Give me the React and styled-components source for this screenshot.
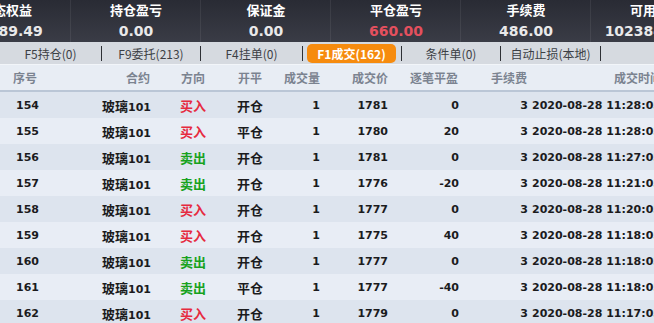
import React from "react";
import styled, { createGlobalStyle } from "styled-components";

const Global = createGlobalStyle`
  html, body { margin: 0; padding: 0; background: #e6ebf2; overflow: hidden; }
  body { width: 654px; height: 323px; font-family: "DejaVu Sans", "Noto Sans CJK SC", sans-serif; }
`;

const Page = styled.div`
  width: 654px;
  height: 323px;
  overflow: hidden;
  display: flex;
  flex-direction: column;
`;

const Summary = styled.div`
  height: 42px;
  flex: none;
  background: linear-gradient(#292b34, #3a3c46);
  display: flex;
  margin-left: -59px;
  width: 780px;
`;

const SumCell = styled.div`
  width: 130px;
  flex: none;
  display: flex;
  flex-direction: column;
  align-items: center;
  box-shadow: inset -1px 0 0 rgba(255, 255, 255, 0.07);
  white-space: nowrap;
`;

const SumLabel = styled.div`
  font-family: "Noto Sans CJK SC", sans-serif;
  font-weight: 700;
  font-size: 13px;
  line-height: 14px;
  margin-top: 3px;
  color: #ffffff;
`;

const SumValue = styled.div`
  font-family: "DejaVu Sans", sans-serif;
  font-weight: 700;
  font-size: 14px;
  line-height: 18px;
  margin-top: 5px;
  color: ${(p) => (p.$red ? "#e4505e" : "#e9e9ea")};
`;

const TabBar = styled.div`
  height: 22px;
  flex: none;
  background: #d6dae0;
  display: flex;
  align-items: center;
`;

const Tab = styled.div`
  width: ${(p) => p.$w}px;
  flex: none;
  display: flex;
  justify-content: center;
  align-items: center;
  height: 19px;
  font-family: "Noto Sans CJK SC", sans-serif;
  font-size: 12px;
  white-space: nowrap;
  color: ${(p) => (p.$active ? "#ffffff" : "#3c3f45")};
  font-weight: ${(p) => (p.$active ? 700 : 400)};
  background: ${(p) => (p.$active ? "#f68b0e" : "transparent")};
  border-radius: 5px;
`;

const Sep = styled.div`
  width: 1px;
  height: 15px;
  background: #2e3035;
  flex: none;
  margin-left: ${(p) => p.$ml || 0}px;
  margin-right: ${(p) => p.$mr || 0}px;
`;

const cols = "60px 92px 82px 32px 55px 68px 71px 69px 220px";

const HeadRow = styled.div`
  display: grid;
  grid-template-columns: ${cols};
  height: 25px;
  flex: none;
  align-items: center;
  background: #e8edf4;
  border-bottom: 2px solid #bac6d6;
  border-top: 1px solid #f2f5f9;
`;

const HeadCell = styled.div`
  font-family: "Noto Sans CJK SC", sans-serif;
  font-weight: 700;
  font-size: 12px;
  color: #7b8390;
  white-space: nowrap;
  text-align: ${(p) => p.$align || "right"};
  padding-left: ${(p) => p.$pl || 0}px;
  padding-right: ${(p) => p.$pr || 0}px;
`;

const Row = styled.div`
  display: grid;
  grid-template-columns: ${cols};
  height: 26px;
  flex: none;
  align-items: center;
  background: ${(p) => (p.$odd ? "#dde4ee" : "#e8edf5")};
`;

const Cell = styled.div`
  font-family: "DejaVu Sans", "Noto Sans CJK SC", sans-serif;
  font-weight: 700;
  font-size: 11px;
  color: ${(p) => p.$color || "#1b1b1d"};
  white-space: nowrap;
  text-align: ${(p) => p.$align || "right"};
  padding-left: ${(p) => p.$pl || 0}px;
  padding-right: ${(p) => p.$pr || 0}px;
`;

const Cjk = styled.span`
  font-family: "Noto Sans CJK SC", sans-serif;
  font-size: 13px;
`;

const summary = [
  ["动态权益", "10289.49"],
  ["持仓盈亏", "0.00"],
  ["保证金", "0.00"],
  ["平仓盈亏", "660.00", true],
  ["手续费", "486.00"],
  ["可用资金", "10238489.49"],
];

// [label, width, separator margin-left, separator margin-right, active]
const tabs = [
  ["F5持仓(0)", 101, 0, 0],
  ["F9委托(213)", 98, 0, 0],
  ["F4挂单(0)", 101, 0, 4],
  ["F1成交(162)", 89, 5, 0, true],
  ["条件单(0)", 98, 0, 0],
  ["自动止损(本地)", 99, 0, 0],
];

const rows = [
  [154, "买", "开", 1781, "0", "11:28:"],
  [155, "买", "平", 1780, "20", "11:28:"],
  [156, "卖", "开", 1781, "0", "11:27:"],
  [157, "卖", "开", 1776, "-20", "11:21:"],
  [158, "买", "开", 1777, "0", "11:20:"],
  [159, "买", "开", 1775, "40", "11:18:"],
  [160, "卖", "开", 1777, "0", "11:18:"],
  [161, "卖", "平", 1777, "-40", "11:18:"],
  [162, "买", "开", 1779, "0", "11:17:"],
];

export default function App() {
  return (
    <Page>
      <Global />
      <Summary>
        {summary.map(([l, v, red]) => (
          <SumCell key={l}>
            <SumLabel>{l}</SumLabel>
            <SumValue $red={red}>{v}</SumValue>
          </SumCell>
        ))}
      </Summary>
      <TabBar>
        {tabs.map(([t, w, ml, mr, active]) => (
          <React.Fragment key={t}>
            <Tab $w={w} $active={active}>{t}</Tab>
            <Sep $ml={ml} $mr={mr} />
          </React.Fragment>
        ))}
      </TabBar>
      <HeadRow>
        <HeadCell $align="left" $pl={13}>序号</HeadCell>
        <HeadCell $pr={2}>合约</HeadCell>
        <HeadCell $align="center">方向</HeadCell>
        <HeadCell $align="center">开平</HeadCell>
        <HeadCell $pr={1}>成交量</HeadCell>
        <HeadCell $pr={1}>成交价</HeadCell>
        <HeadCell $pr={2}>逐笔平盈</HeadCell>
        <HeadCell $pr={2}>手续费</HeadCell>
        <HeadCell $align="left" $pl={85}>成交时间</HeadCell>
      </HeadRow>
      {rows.map(([id, dir, oc, price, pl, time], i) => (
        <Row key={id} $odd={i % 2 === 0}>
          <Cell $align="left" $pl={16}>{id}</Cell>
          <Cell $pr={1}><Cjk>玻璃</Cjk>101</Cell>
          <Cell $align="center" $color={dir === "买" ? "#e62b3f" : "#17a21d"}>
            <Cjk>{dir === "买" ? "买入" : "卖出"}</Cjk>
          </Cell>
          <Cell $align="center"><Cjk>{oc}仓</Cjk></Cell>
          <Cell $pr={1}>1</Cell>
          <Cell $pr={1}>{price}</Cell>
          <Cell $pr={1}>{pl}</Cell>
          <Cell $pr={1}>3</Cell>
          <Cell $align="left" $pl={3}>2020-08-28 {time}05</Cell>
        </Row>
      ))}
    </Page>
  );
}
